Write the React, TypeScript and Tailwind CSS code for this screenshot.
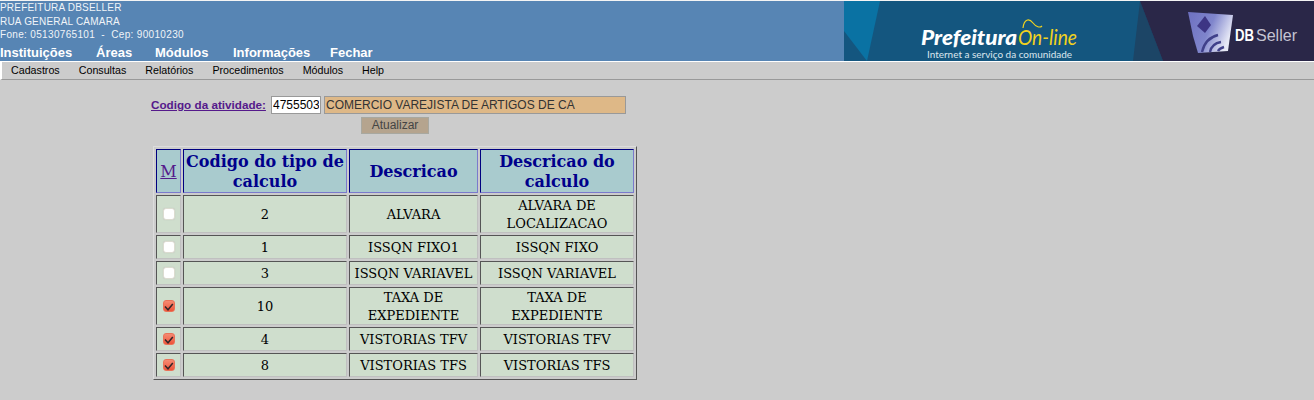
const sans = "font-['Liberation_Sans',Arial,sans-serif]";
const serif = "font-['DejaVu_Serif',serif]";

const topLinks = [
  { label: 'Instituições', cls: 'w-[96px]' },
  { label: 'Áreas', cls: 'w-[59px]' },
  { label: 'Módulos', cls: 'w-[78px]' },
  { label: 'Informações', cls: 'w-[97px]' },
  { label: 'Fechar', cls: '' },
];
const subLinks = ['Cadastros', 'Consultas', 'Relatórios', 'Procedimentos', 'Módulos', 'Help'];

const rows = [
  { code: '2', desc: 'ALVARA', calc: 'ALVARA DE LOCALIZACAO', on: false, h: 'h-[38px]' },
  { code: '1', desc: 'ISSQN FIXO1', calc: 'ISSQN FIXO', on: false, h: 'h-[24px]' },
  { code: '3', desc: 'ISSQN VARIAVEL', calc: 'ISSQN VARIAVEL', on: false, h: 'h-[24px]' },
  { code: '10', desc: 'TAXA DE EXPEDIENTE', calc: 'TAXA DE EXPEDIENTE', on: true, h: 'h-[38px]' },
  { code: '4', desc: 'VISTORIAS TFV', calc: 'VISTORIAS TFV', on: true, h: 'h-[24px]' },
  { code: '8', desc: 'VISTORIAS TFS', calc: 'VISTORIAS TFS', on: true, h: 'h-[24px]' },
];

function Check({ on }: { on: boolean }) {
  if (!on) {
    return <span className="block w-[12px] h-[12px] mx-auto rounded-[3px] bg-white border border-[#dcdcd0] shadow-[0_0_1px_#bbb]" />;
  }
  return (
    <span className="block w-[12px] h-[12px] mx-auto rounded-[3px] bg-gradient-to-b from-[#f58a72] to-[#ee5238] border border-[#ea7258]">
      <svg viewBox="0 0 10 10" className="block w-[10px] h-[10px]">
        <path d="M1 5.5 L4 8.8 L8.8 3" fill="none" stroke="#33262a" strokeWidth="1.5" />
      </svg>
    </span>
  );
}

function Banner() {
  return (
    <svg viewBox="0 0 470 60" className="block w-[470px] h-[60px] shrink-0">
      <defs>
        <linearGradient id="cube" x1="0" y1="0" x2="1" y2="0.4">
          <stop offset="0" stopColor="#6d70c0" />
          <stop offset="0.55" stopColor="#7f85cc" />
          <stop offset="1" stopColor="#e6e8f6" />
        </linearGradient>
        <filter id="soft">
          <feGaussianBlur stdDeviation="0.7" />
        </filter>
      </defs>
      <rect width="470" height="60" fill="#14567f" />
      <polygon points="0,0 36,0 23,60 0,30" fill="#0a72a3" />
      <polygon points="289,60 296,0 319,60" fill="#1c4566" />
      <polygon points="296,0 470,0 470,60 319,60" fill="#2a2748" />
      <text x="77" y="44" fill="#fff" fontFamily="Lato,sans-serif" fontSize="20" fontWeight="900" fontStyle="italic" textLength="96" lengthAdjust="spacingAndGlyphs">Prefeitura</text>
      <text x="174" y="44" fill="#f2d21e" fontFamily="Lato,sans-serif" fontSize="21" fontStyle="italic" textLength="59" lengthAdjust="spacingAndGlyphs">On-line</text>
      <path d="M179 27 C180 18 185 17 189 22 C192 26 196 27 198 25" fill="none" stroke="#f2d21e" strokeWidth="1.2" />
      <text x="83" y="57" fill="#dbe6ee" fontFamily="Lato,sans-serif" fontSize="9" textLength="145" lengthAdjust="spacingAndGlyphs">Internet a serviço da comunidade</text>
      <g filter="url(#soft)">
        <polygon points="344,11 389,14 384,50 354,52 349,35" fill="url(#cube)" />
        <polygon points="361,15 367,24 361,32 353,25" fill="#3d3684" />
        <path d="M358 51 C360 42 366 36 374 34 M366 51 C367 46 371 42 377 41 M374 50 C375 48 377 47 380 46" fill="none" stroke="#40408a" strokeWidth="2.4" />
      </g>
      <text x="391" y="40" fill="#fff" fontFamily="'Liberation Sans',sans-serif" fontSize="16" fontWeight="700" textLength="19" lengthAdjust="spacingAndGlyphs">DB</text>
      <text x="412" y="40" fill="#c4c4d2" fontFamily="'Liberation Sans',sans-serif" fontSize="16" textLength="41" lengthAdjust="spacingAndGlyphs">Seller</text>
    </svg>
  );
}

function CellText({ children }: { children: React.ReactNode }) {
  return <div className="mt-px -mb-px">{children}</div>;
}

export default function App() {
  const th = `bg-[#a9cbce] border border-t-[#000080] border-l-[#000080] border-r-[#7a7acc] border-b-[#7a7acc] text-[#00008b] text-[16px] leading-[20px] font-bold text-center p-0 ${serif}`;
  const td = `bg-[#cfdecd] border border-t-[#555] border-l-[#555] border-r-[#c0c0c0] border-b-[#c0c0c0] text-[13px] leading-[18px] font-normal text-center text-black p-0 ${serif}`;

  return (
    <div className={`w-[1314px] h-[400px] bg-[#cccccc] overflow-hidden border-t border-t-[#f4f4f4] ${sans}`}>
      {/* Header */}
      <div className="flex justify-between h-[60px] bg-[#5785b4] text-white">
        <div className="flex flex-col">
          <div className="text-[10px] leading-[14px] tracking-[0.2px] text-[#f0f4f8]">PREFEITURA DBSELLER</div>
          <div className="text-[10px] leading-[13px] tracking-[0.2px] text-[#f0f4f8]">RUA GENERAL CAMARA</div>
          <div className="text-[10px] leading-[13px] tracking-[0.33px] text-[#f0f4f8] whitespace-pre">Fone: 05130765101  -  Cep: 90010230</div>
          <div className="flex text-[13px] leading-[15px] font-bold mt-[4px]">
            {topLinks.map(l => (
              <span key={l.label} className={l.cls}>{l.label}</span>
            ))}
          </div>
        </div>
        <Banner />
      </div>

      {/* Submenu */}
      <div className="flex h-[19px] bg-[#cccccc] border-t border-t-white border-l-2 border-l-white border-b border-b-[#999] text-[10.7px] leading-[17px] text-black pl-[9px] gap-[19px]">
        {subLinks.map(s => (
          <span key={s}>{s}</span>
        ))}
      </div>

      {/* Form */}
      <div className="flex items-center h-[18px] mt-[16px] ml-[151px]">
        <a className="w-[116px] whitespace-nowrap text-[11.7px] font-bold text-[#551a8b] underline mr-[4px]">Codigo da atividade:</a>
        <input
          readOnly
          value="4755503"
          className="w-[50px] h-[18px] bg-white border border-[#999] text-[12px] text-black px-[1px] outline-none mr-[3px]"
        />
        <input
          readOnly
          value="COMERCIO VAREJISTA DE ARTIGOS DE CA"
          className="w-[302px] h-[18px] bg-[#deb887] border border-[#999] text-[12px] text-[#333] px-[1px] outline-none"
        />
      </div>
      <button className="block w-[68px] h-[17px] mt-[3px] ml-[361px] bg-[#b5a48e] border border-[#a8a8a0] text-[12px] leading-[15px] text-[#444]">
        Atualizar
      </button>

      {/* Table */}
      <table className="mt-[12px] ml-[153px] w-[484px] table-fixed border-separate border-spacing-[2px] bg-[#cccccc] border border-t-[#dcdcdc] border-l-[#dcdcdc] border-r-[#555] border-b-[#555]">
        <colgroup>
          <col className="w-[25px]" />
          <col className="w-[164px]" />
          <col className="w-[129px]" />
          <col className="w-[154px]" />
        </colgroup>
        <thead>
          <tr className="h-[44px]">
            <th className={th + ' !font-normal'}><CellText><a className="text-[#551a8b] underline text-[16px]">M</a></CellText></th>
            <th className={th}><CellText>Codigo do tipo de calculo</CellText></th>
            <th className={th}><CellText>Descricao</CellText></th>
            <th className={th}><CellText>Descricao do calculo</CellText></th>
          </tr>
        </thead>
        <tbody>
          {rows.map(r => (
            <tr key={r.code} className={r.h}>
              <td className={td}><Check on={r.on} /></td>
              <td className={td}><CellText>{r.code}</CellText></td>
              <td className={td}><CellText>{r.desc}</CellText></td>
              <td className={td}><CellText>{r.calc}</CellText></td>
            </tr>
          ))}
        </tbody>
      </table>
    </div>
  );
}
